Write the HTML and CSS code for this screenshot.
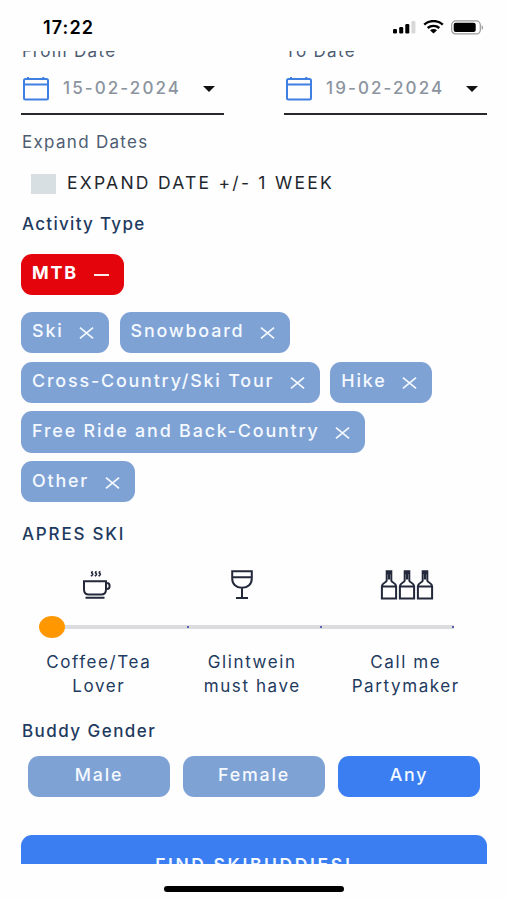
FILE: index.html
```html
<!DOCTYPE html>
<html lang="en">

<head>
    <meta charset="UTF-8">
    <meta name="viewport" content="width=device-width, initial-scale=1.0">
    <title>Find Skibuddies</title>
    <link rel="stylesheet" href="styles.css">
</head>

<body>
    <!-- shared icons -->
    <svg class="sprite" width="0" height="0">
        <symbol id="calendar" viewBox="0 0 28 26">
            <rect x="2" y="4" width="24" height="20.5" rx="1.5" />
            <path d="M2 9.5h24M6 2v3M21.3 2v3" />
        </symbol>
        <symbol id="close" viewBox="0 0 16 14">
            <path d="M1 1.2l14 11.6M15 1.2L1 12.8" />
        </symbol>
        <symbol id="bottle" viewBox="0 0 18 30">
            <path d="M6.7 1.2h4.6v9.3c0 2 4.8 2.2 4.8 5.8v12.2H1.9V16.3c0-3.6 4.8-3.8 4.8-5.8zM6.7 3.3h4.6M1.9 16.6h14.2M9 3v6.5" />
        </symbol>
    </svg>

    <div class="status-bar">
        <span class="time">17:22</span>
        <div class="status-icons">
            <svg width="23" height="14" viewBox="0 0 23 14">
                <rect x="0" y="9" width="4" height="4.5" rx="1.3" />
                <rect x="6.2" y="7" width="4" height="6.5" rx="1.2" />
                <rect x="12.3" y="4" width="4" height="9.5" rx="1.2" />
                <rect x="18.4" y="1" width="4" height="12.5" rx="1.2" fill="#d8d8d8" />
            </svg>
            <svg class="wifi" width="21" height="14" viewBox="0 0 21 14">
                <path d="M1.2 4.6C6.3-.1 14.7-.1 19.8 4.6M4.7 8c3.2-2.9 8.4-2.9 11.6 0" />
                <path class="dot" d="M7 10.3c2-1.6 5-1.6 7 0L10.5 13.6z" />
            </svg>
            <svg class="battery" width="33" height="15" viewBox="0 0 33 15">
                <rect x=".7" y=".9" width="28.6" height="13" rx="4" fill="none" stroke="#999" stroke-width="1.2" />
                <rect x="2.7" y="2.8" width="22" height="9.2" rx="2" />
                <path d="M30.7 5.2c1.8.7 1.8 3.9 0 4.6z" fill="#999" />
            </svg>
        </div>
    </div>

    <div class="screen">
        <div class="dates">
            <div class="field">
                <label class="light">From Date</label>
                <div class="date">
                    <svg class="cal-icon"><use href="#calendar" /></svg>
                    <span>15-02-2024</span>
                    <i class="caret"></i>
                </div>
            </div>
            <div class="field">
                <label class="light">To Date</label>
                <div class="date">
                    <svg class="cal-icon"><use href="#calendar" /></svg>
                    <span>19-02-2024</span>
                    <i class="caret"></i>
                </div>
            </div>
        </div>

        <div class="label light expand-label">Expand Dates</div>
        <div class="check-row">
            <span class="checkbox"></span>
            <span>EXPAND DATE +/- 1 WEEK</span>
        </div>

        <div class="label activity-label">Activity Type</div>
        <div class="chips selected">
            <div class="chip active">MTB <i class="minus"></i></div>
        </div>
        <div class="chips">
            <div class="chip">Ski <svg><use href="#close" /></svg></div>
            <div class="chip">Snowboard <svg><use href="#close" /></svg></div>
            <div class="chip">Cross-Country/Ski Tour <svg><use href="#close" /></svg></div>
            <div class="chip">Hike <svg><use href="#close" /></svg></div>
            <div class="chip">Free Ride and Back-Country <svg><use href="#close" /></svg></div>
            <div class="chip">Other <svg><use href="#close" /></svg></div>
        </div>

        <div class="label apres-label">APRES SKI</div>
        <div class="apres-icons">
            <svg class="cup" width="30" height="30" viewBox="0 0 30 30">
                <path d="M2 11.2h22v8.3c0 3-1.8 5-4.8 5H6.8c-3 0-4.8-2-4.8-5zM24 13h1c1.7 0 2.6 1.2 2.6 3s-.9 3-2.6 3H24M3.5 27.8h19" />
                <path class="steam" d="M10.8 1.5c-2.6.8-.2 2 0 2.8s-1.4 1.4-1.8 2M14.6 1.5c-2.6.8-.2 2 0 2.8s-1.4 1.4-1.8 2M18.4 1.5c-2.6.8-.2 2 0 2.8s-1.4 1.4-1.8 2" />
            </svg>
            <svg class="glass" width="22" height="30" viewBox="0 0 22 30">
                <path d="M1.2 1.3h19.6v7.2c0 5.5-4 9.3-9.8 9.3s-9.8-3.8-9.8-9.3zM1.2 7.3h19.6M11 17.8v10M5 28h12" />
            </svg>
            <div class="bottles">
                <svg><use href="#bottle" /></svg>
                <svg><use href="#bottle" /></svg>
                <svg><use href="#bottle" /></svg>
            </div>
        </div>
        <div class="slider">
            <span class="thumb"></span>
            <span class="track"><i></i><i></i><i></i></span>
        </div>
        <div class="captions">
            <div>Coffee/Tea<br>Lover</div>
            <div>Glintwein<br>must have</div>
            <div>Call me<br>Partymaker</div>
        </div>

        <div class="label gender-label">Buddy Gender</div>
        <div class="genders">
            <button>Male</button>
            <button>Female</button>
            <button class="on">Any</button>
        </div>

        <button class="find">FIND SKIBUDDIES!</button>
    </div>

    <div class="home-bar"></div>
</body>

</html>
```
FILE: styles.css
```css
* {
    box-sizing: border-box;
}

body {
    margin: 0;
    height: 900px;
    overflow: hidden;
    background-color: #fefefe;
    color: #1f3a5f;
    font-family: Inter, "Noto Sans", sans-serif;
    font-size: 17px;
    letter-spacing: 1.3px;
}

svg {
    display: block;
    flex: none;
}

.sprite {
    position: absolute;
}

.status-bar {
    display: flex;
    justify-content: space-between;
    align-items: center;
    height: 51px;
    padding: 3px 23px 0 43px;
    color: #000;
}

.time {
    font-size: 18px;
    font-weight: 600;
    letter-spacing: 1.1px;
}

.status-icons {
    display: flex;
    align-items: center;
    gap: 7px;
}

.wifi path {
    fill: none;
    stroke: #000;
    stroke-width: 2.4;
}

.wifi .dot {
    fill: #000;
    stroke: none;
}

.screen {
    height: 813px;
    padding: 0 20px 0 21px;
    overflow: hidden;
}

.dates {
    display: flex;
    justify-content: space-between;
    margin-top: -10px;
}

.field {
    width: 203px;
    height: 74px;
    border-bottom: 2px solid #26282c;
}

.field label,
.label {
    display: block;
    height: 20px;
    line-height: 20px;
    padding-left: 1px;
    font-weight: 500;
}

.field .light,
.light {
    color: #4d5c72;
    font-weight: 400;
}

.date {
    display: flex;
    align-items: center;
    height: 52px;
    padding: 1px 9px 0 1px;
    color: #8b949f;
    font-size: 17px;
    font-weight: 500;
    letter-spacing: 2.1px;
}

.cal-icon {
    width: 28px;
    height: 26px;
    margin: 0 13px 0 0;
    fill: none;
    stroke: #3f7fe0;
    stroke-width: 2;
}

.caret {
    margin: 3px 0 0 auto;
    border: 6.5px solid transparent;
    border-top: 6px solid #111;
    border-bottom: 0;
}

.expand-label {
    margin-top: 17px;
}

.check-row {
    display: flex;
    align-items: center;
    gap: 11px;
    height: 20px;
    margin-top: 20px;
    padding-left: 10px;
    color: #23272d;
    font-size: 17.5px;
    letter-spacing: 2.25px;
}

.checkbox {
    width: 25px;
    height: 20px;
    margin-top: 3px;
    background-color: #d8dfe2;
}

.activity-label {
    margin-top: 22px;
}

.chips {
    display: flex;
    flex-wrap: wrap;
    gap: 8.5px 10.5px;
    margin-top: 17px;
    padding-right: 10px;
}

.chips.selected {
    margin-top: 19.5px;
}

.chip {
    display: flex;
    align-items: center;
    height: 41.3px;
    padding: 0 15px 3px 11px;
    border-radius: 11px;
    background-color: #7fa2d5;
    color: #f4f9ff;
    font-size: 17.9px;
    font-weight: 500;
    letter-spacing: 1.82px;
}

.chip svg {
    width: 15px;
    height: 14px;
    margin: 5px 0 0 15.5px;
    stroke: #f4f9ff;
    stroke-width: 1.8;
}

.chip.active {
    background-color: #e3040c;
    color: #fff;
    font-weight: 700;
}

.minus {
    width: 15px;
    height: 2px;
    margin: 5px 0 0 16px;
    background-color: #ffe9e9;
}

.apres-label {
    margin-top: 21.5px;
    letter-spacing: 1.8px;
}

.apres-icons {
    display: flex;
    height: 30px;
    margin-top: 26px;
    fill: none;
    stroke: #23283a;
    stroke-width: 2;
}

.cup {
    margin-left: 61px;
}

.steam {
    stroke-width: 1.6;
}

.glass {
    margin-left: 119px;
}

.bottles {
    display: flex;
    margin-left: 127px;
}

.bottles svg {
    width: 18px;
    height: 30px;
}

.slider {
    display: flex;
    align-items: center;
    height: 22px;
    margin: 16.5px 0 0 18px;
}

.thumb {
    width: 26px;
    height: 22px;
    border-radius: 50%;
    background-color: #ff9800;
}

.track {
    display: flex;
    align-items: center;
    justify-content: space-between;
    width: 389px;
    height: 4px;
    padding-left: 122px;
    background-color: #dcdcde;
}

.track i {
    width: 2px;
    height: 2px;
    background-color: #5a62b5;
}

.captions {
    display: flex;
    margin: 13px 0 0 1px;
    line-height: 23.5px;
    letter-spacing: 1.6px;
    text-align: center;
}

.captions div {
    width: 153.5px;
}

.gender-label {
    margin-top: 22.5px;
    letter-spacing: 1.45px;
}

.genders {
    display: flex;
    gap: 13px;
    margin-top: 15.5px;
    padding: 0 7px;
}

button {
    border: none;
    color: #f4f9ff;
    font: inherit;
    font-weight: 500;
    letter-spacing: 1.8px;
}

.genders button {
    flex: 1;
    height: 41px;
    padding: 0 0 4px;
    border-radius: 11px;
    background-color: #7fa2d5;
    font-size: 17.8px;
}

.genders .on {
    background-color: #3a7ef2;
}

.find {
    display: block;
    width: 100%;
    height: 58px;
    margin-top: 38px;
    border-radius: 11px;
    background-color: #3a7ef2;
    font-size: 17.5px;
    font-weight: 600;
    letter-spacing: 2.6px;
}

.home-bar {
    width: 180px;
    height: 5.5px;
    margin: 22px auto 0;
    border-radius: 3px;
    background-color: #000;
}
```
